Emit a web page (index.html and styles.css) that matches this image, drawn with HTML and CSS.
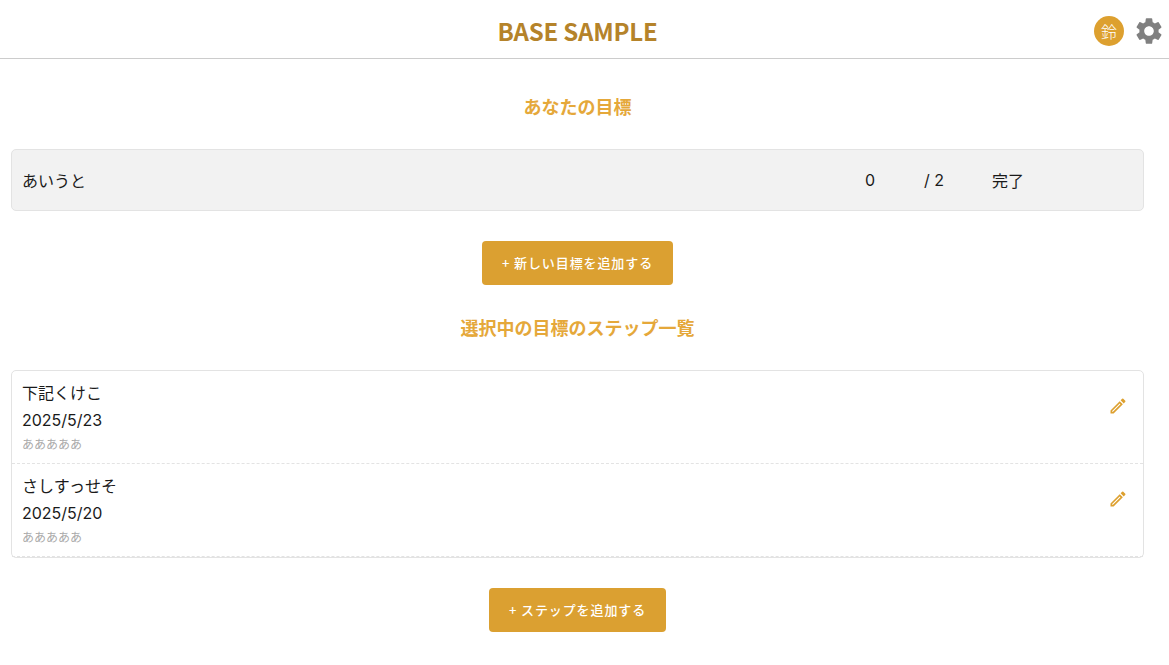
FILE: index.html
```html
<!DOCTYPE html>
<html lang="ja">
<head>
<meta charset="utf-8">
<title>BASE SAMPLE</title>
<link rel="stylesheet" href="styles.css">
</head>
<body>
<header class="app-header">
  <h1 class="app-title">BASE SAMPLE</h1>
  <div class="header-actions">
    <span class="avatar">鈴</span>
    <svg class="gear" viewBox="0 0 24 24" width="32" height="32"><path d="M19.14 12.94c.04-.3.06-.61.06-.94 0-.32-.02-.64-.07-.94l2.03-1.58a.49.49 0 0 0 .12-.61l-1.92-3.32a.488.488 0 0 0-.59-.22l-2.39.96c-.5-.38-1.03-.7-1.62-.94l-.36-2.54a.484.484 0 0 0-.48-.41h-3.84c-.24 0-.43.17-.47.41l-.36 2.54c-.59.24-1.13.57-1.62.94l-2.39-.96c-.22-.08-.47 0-.59.22L2.74 8.87c-.12.21-.08.47.12.61l2.03 1.58c-.05.3-.09.63-.09.94s.02.64.07.94l-2.03 1.58a.49.49 0 0 0-.12.61l1.92 3.32c.12.22.37.29.59.22l2.39-.96c.5.38 1.03.7 1.62.94l.36 2.54c.05.24.24.41.48.41h3.84c.24 0 .44-.17.47-.41l.36-2.54c.59-.24 1.13-.56 1.62-.94l2.39.96c.22.08.47 0 .59-.22l1.92-3.32c.12-.22.07-.47-.12-.61l-2.01-1.58zM12 15.6c-1.98 0-3.6-1.62-3.6-3.6s1.62-3.6 3.6-3.6 3.6 1.62 3.6 3.6-1.62 3.6-3.6 3.6z"/></svg>
  </div>
</header>
<main class="page">
  <h2 class="section-title first">あなたの目標</h2>
  <div class="goal-card">
    <span class="goal-name">あいうと</span>
    <span class="goal-done">0</span>
    <span class="goal-total">/ 2</span>
    <span class="goal-status">完了</span>
  </div>
  <div class="btn-row"><button class="btn">+ 新しい目標を追加する</button></div>
  <h2 class="section-title">選択中の目標のステップ一覧</h2>
  <ul class="step-list">
    <li class="step">
      <div class="step-body">
        <div class="step-name">下記くけこ</div>
        <div class="step-date">2025/5/23</div>
        <div class="step-note">あああああ</div>
      </div>
      <svg class="pencil" viewBox="0 0 24 24" width="20" height="20"><path d="M3 17.25V21h3.75L17.81 9.94l-3.75-3.75L3 17.25zM5.92 19H5v-.92l9.06-9.06.92.92L5.92 19zM20.71 7.04a1 1 0 0 0 0-1.41l-2.34-2.34a1 1 0 0 0-1.41 0l-1.83 1.83 3.75 3.75 1.83-1.83z"/></svg>
    </li>
    <li class="step">
      <div class="step-body">
        <div class="step-name">さしすっせそ</div>
        <div class="step-date">2025/5/20</div>
        <div class="step-note">あああああ</div>
      </div>
      <svg class="pencil" viewBox="0 0 24 24" width="20" height="20"><path d="M3 17.25V21h3.75L17.81 9.94l-3.75-3.75L3 17.25zM5.92 19H5v-.92l9.06-9.06.92.92L5.92 19zM20.71 7.04a1 1 0 0 0 0-1.41l-2.34-2.34a1 1 0 0 0-1.41 0l-1.83 1.83 3.75 3.75 1.83-1.83z"/></svg>
    </li>
  </ul>
  <div class="btn-row"><button class="btn">+ ステップを追加する</button></div>
</main>
</body>
</html>
```
FILE: styles.css
```css
* { box-sizing: border-box; }
html, body { margin: 0; padding: 0; }
body {
  background: #fff;
  color: #1a1a1a;
  font-family: Inter, "Noto Sans CJK JP", sans-serif;
  font-size: 16px;
  height: 665px;
  overflow: hidden;
}
.app-header {
  height: 59px;
  border-bottom: 1px solid #ccc;
  display: flex;
  align-items: center;
  justify-content: center;
  padding-right: 14px;
  position: relative;
}
.app-title {
  margin: 0;
  font-family: "Noto Sans CJK JP", sans-serif;
  font-size: 24px;
  font-weight: 600;
  letter-spacing: -0.2px;
  color: #b5832a;
  line-height: 1;
  position: relative;
  top: 2px;
}
.header-actions {
  position: absolute;
  right: 4px;
  top: 15px;
  display: flex;
  align-items: center;
  gap: 9px;
}
.avatar {
  width: 30px;
  height: 30px;
  border-radius: 50%;
  background: #dda02f;
  color: #fff;
  font-family: "Noto Sans CJK JP", sans-serif;
  font-size: 16px;
  font-weight: 300;
  display: flex;
  align-items: center;
  justify-content: center;
}
.gear { fill: #808080; display: block; }
.page { width: 1155px; padding: 0 11px; }
.section-title {
  margin: 0;
  text-align: center;
  font-family: "Noto Sans CJK JP", sans-serif;
  font-size: 18px;
  font-weight: 600;
  line-height: 24px;
  color: #e5a83a;
  padding: 30px 0 31px;
}
.section-title.first { padding-top: 35px; }
.goal-card {
  height: 62px;
  background: #f2f2f2;
  border: 1px solid #e3e3e3;
  border-radius: 5px;
  display: flex;
  align-items: center;
  padding: 0 0 1px 10px;
}
.goal-name { flex: 1; }
.goal-done { width: 59px; }
.goal-total { width: 68px; }
.goal-status { width: 151px; }
.btn-row { display: flex; justify-content: center; padding-top: 30px; }
.btn {
  height: 44px;
  border: 0;
  border-radius: 4px;
  background: #dba031;
  color: #fff;
  font-family: "Noto Sans CJK JP", sans-serif;
  font-size: 13px;
  font-weight: 500;
  letter-spacing: 0.9px;
  padding: 0 20px 1px;
}
.step-list {
  list-style: none;
  margin: 0;
  padding: 0;
  border: 1px solid #e3e3e3;
  border-radius: 5px;
  height: 188px;
}
.step {
  height: 93px;
  border-bottom: 1px dashed #e3e3e3;
  padding: 9px 15px 0 10px;
  display: flex;
  justify-content: space-between;
}
.step-name, .step-date { line-height: 27px; }
.step-note { font-size: 12px; line-height: 22px; color: #aaa; }
.pencil { fill: #dda02f; margin-top: 16px; display: block; }
```
